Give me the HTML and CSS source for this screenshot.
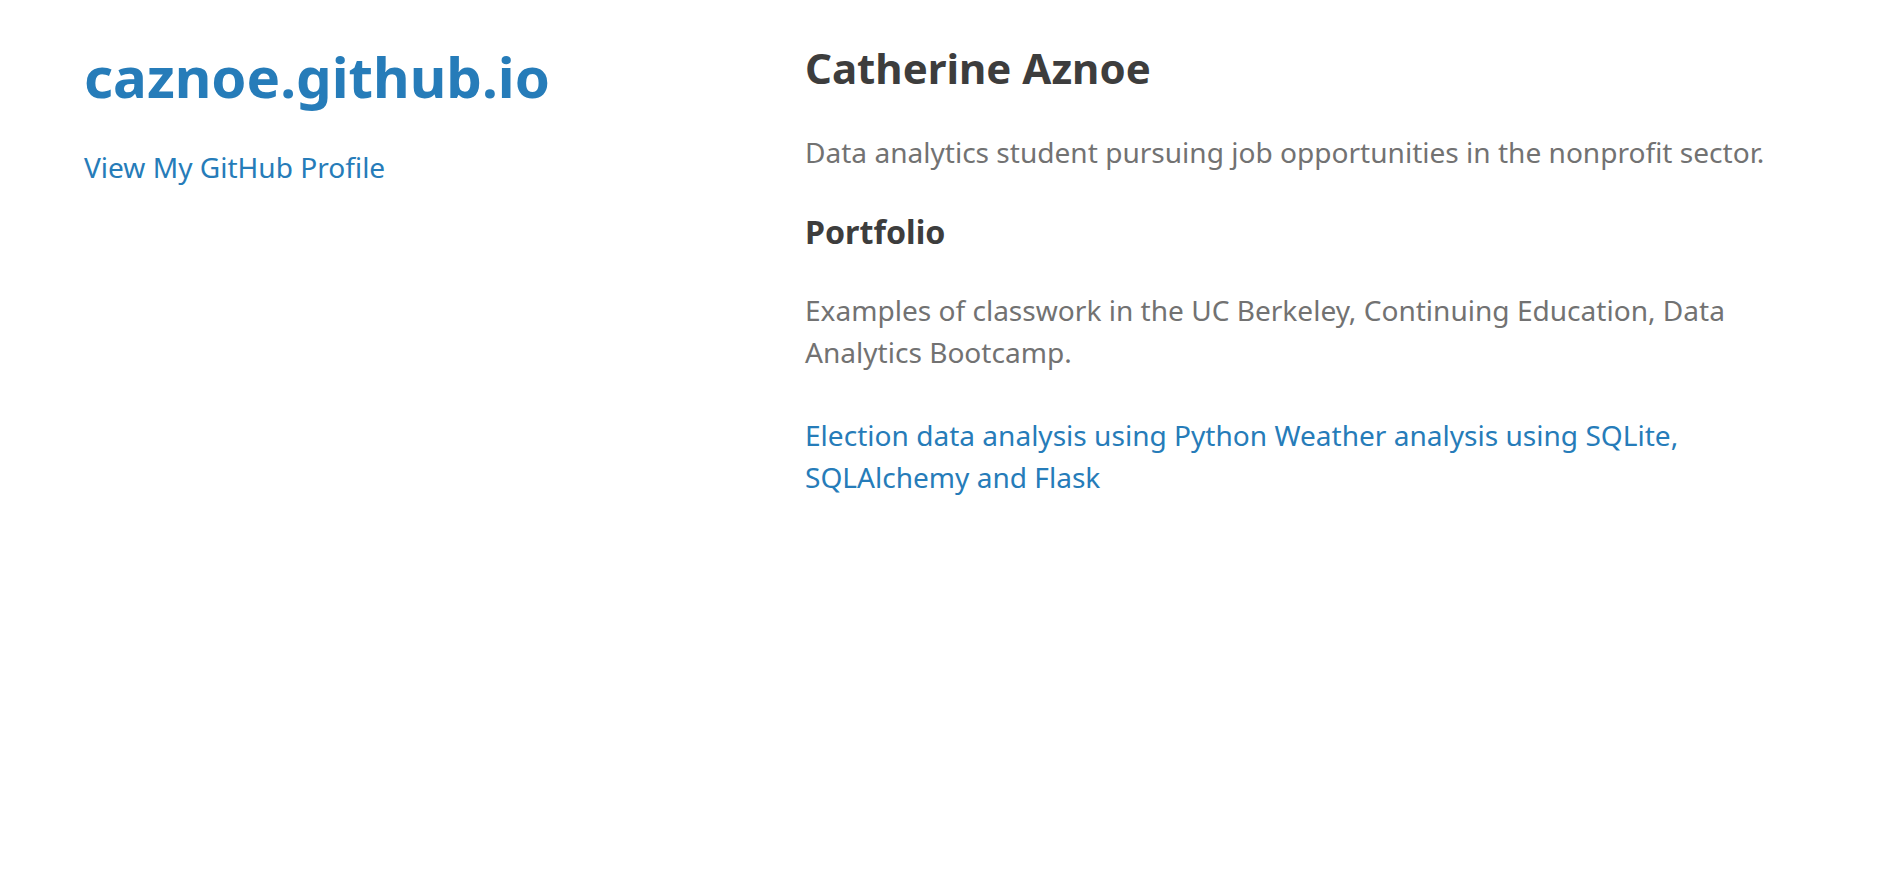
FILE: index.html
```html
<!DOCTYPE html>
<html lang="en">
<head>
<meta charset="utf-8">
<title>caznoe.github.io</title>
<link rel="stylesheet" href="styles.css">
</head>
<body>
<div class="wrapper">
  <header class="site-header">
    <h1 class="site-title"><a href="#">caznoe.github.io</a></h1>
    <p class="profile"><a href="#">View My GitHub Profile</a></p>
  </header>
  <section class="content">
    <h1 class="name">Catherine Aznoe</h1>
    <p class="text">Data analytics student pursuing job opportunities in the nonprofit sector.</p>
    <h3 class="sub">Portfolio</h3>
    <p class="text">Examples of classwork in the UC Berkeley, Continuing Education, Data Analytics Bootcamp.</p>
    <p class="text links"><a href="#">Election data analysis using Python</a> <a href="#">Weather analysis using SQLite, SQLAlchemy and Flask</a></p>
  </section>
</div>
</body>
</html>
```
FILE: styles.css
```css
html, body {
  margin: 0;
  padding: 0;
  background: #fff;
}
body {
  font-family: "Noto Sans", "Open Sans", sans-serif;
  font-size: 28.07px;
  line-height: 42px;
  color: #727272;
}
a {
  color: #267cb9;
  text-decoration: none;
}
.wrapper {
  display: flex;
  padding: 0 0 0 84px;
}
.site-header {
  flex: 0 0 721px;
}
.site-title {
  margin: 46px 0 0 0;
  font-size: 56.4px;
  line-height: 62px;
  font-weight: 700;
}
.profile {
  margin: 38px 0 0 0;
}
.content {
  flex: 0 0 1000px;
}
.name {
  margin: 45px 0 0 0;
  font-size: 42px;
  line-height: 46px;
  font-weight: 700;
  color: #3d3d3d;
}
.sub {
  margin: 41px 0 0 0;
  font-size: 32.2px;
  line-height: 35px;
  font-weight: 700;
  color: #3d3d3d;
}
.text {
  margin: 40px 0 0 0;
}
.links {
  margin-top: 41px;
}
```
